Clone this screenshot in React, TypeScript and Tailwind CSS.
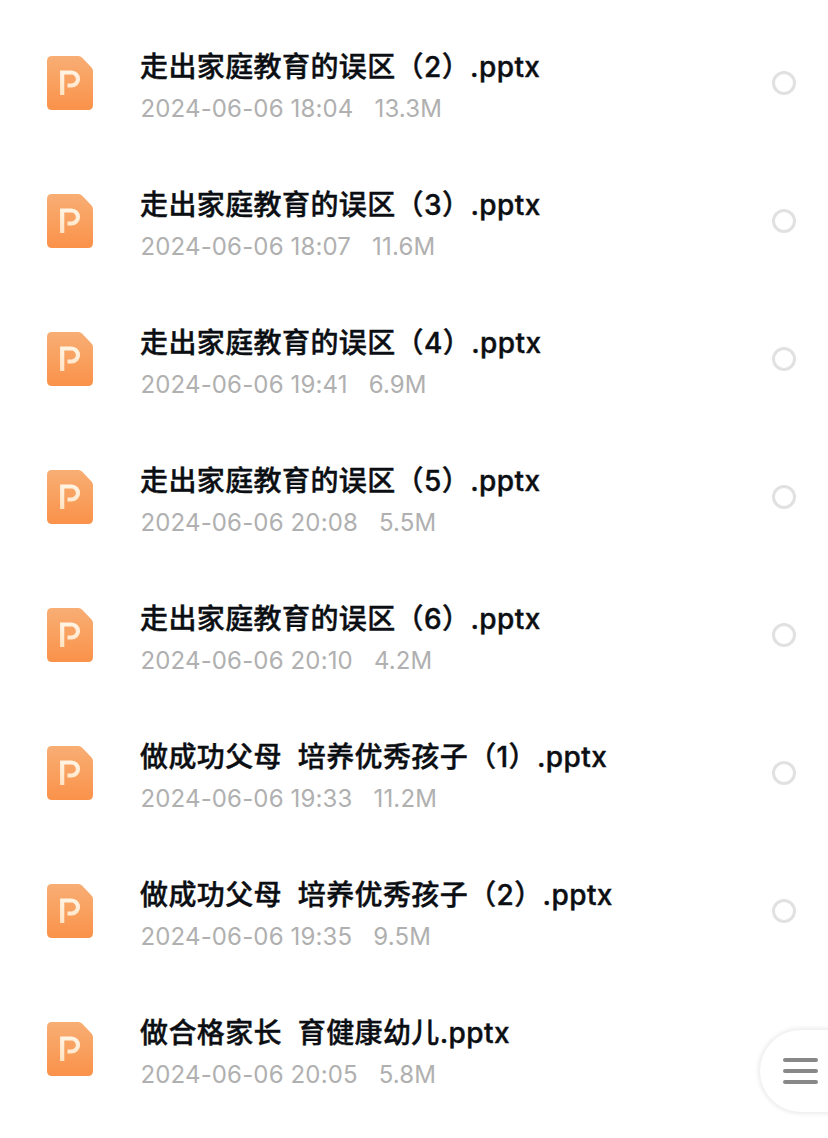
type FileItem = {
  name: string;
  date: string;
  size: string;
  selectable: boolean;
};

const files: FileItem[] = [
  { name: "走出家庭教育的误区（2）.pptx", date: "2024-06-06 18:04", size: "13.3M", selectable: true },
  { name: "走出家庭教育的误区（3）.pptx", date: "2024-06-06 18:07", size: "11.6M", selectable: true },
  { name: "走出家庭教育的误区（4）.pptx", date: "2024-06-06 19:41", size: "6.9M", selectable: true },
  { name: "走出家庭教育的误区（5）.pptx", date: "2024-06-06 20:08", size: "5.5M", selectable: true },
  { name: "走出家庭教育的误区（6）.pptx", date: "2024-06-06 20:10", size: "4.2M", selectable: true },
  { name: "做成功父母  培养优秀孩子（1）.pptx", date: "2024-06-06 19:33", size: "11.2M", selectable: true },
  { name: "做成功父母  培养优秀孩子（2）.pptx", date: "2024-06-06 19:35", size: "9.5M", selectable: true },
  { name: "做合格家长  育健康幼儿.pptx", date: "2024-06-06 20:05", size: "5.8M", selectable: false },
];

function PptIcon() {
  return (
    <svg aria-hidden width="46" height="54" viewBox="0 0 46 54" className="shrink-0">
      <defs>
        <linearGradient id="ppt-body" x1="0" y1="0" x2="0" y2="1">
          <stop offset="0" stopColor="#f8ae74" />
          <stop offset="1" stopColor="#fa924a" />
        </linearGradient>
        <linearGradient id="ppt-letter" x1="0" y1="0" x2="0" y2="1">
          <stop offset="0" stopColor="#fff3e2" />
          <stop offset="1" stopColor="#ffe3c4" />
        </linearGradient>
      </defs>
      <path
        d="M5 0H31.5Q33.500 0 35 1.500L44.500 11.500Q46 13 46 15V49Q46 54 41 54H5Q0 54 0 49V5Q0 0 5 0Z"
        fill="url(#ppt-body)"
      />
      <path
        d="M15.200 39V16.500H24.500A6.300 6.300 0 0 1 24.500 29.500H20.500"
        fill="none"
        stroke="url(#ppt-letter)"
        strokeWidth="4.2"
      />
    </svg>
  );
}

function FileName({ name }: { name: string }) {
  return (
    <p className="text-[28px] leading-[40px] font-medium tracking-[0.4px] text-[#0b0e12] [-webkit-text-stroke:0.4px_#0b0e12]">
      {name.split(/([\d.a-z]+)/).map((part, i) =>
        i % 2 ? (
          <span key={i} className="tracking-[0.4px]">
            {part}
          </span>
        ) : (
          part
        ),
      )}
    </p>
  );
}

function FileRow({ file }: { file: FileItem }) {
  return (
    <li className="flex h-[138px] items-center pr-8 pl-[47px]">
      <PptIcon />
      <div className="ml-[47px] flex-1 pt-[10px] whitespace-pre">
        <FileName name={file.name} />
        <p className="flex gap-[21px] pl-[0.5px] text-[24px] leading-[43px] tracking-[0.15px] text-[#b0b0b0]">
          <span>{file.date}</span>
          <span>{file.size}</span>
        </p>
      </div>
      {file.selectable ? <span className="size-6 rounded-full border-[3px] border-[#e1e1e1]" /> : null}
    </li>
  );
}

export default function App() {
  return (
    <main className="relative h-[1138px] w-[828px] overflow-hidden bg-white pt-[14px] font-['Inter','Noto_Sans_CJK_SC',sans-serif]">
      <ul>
        {files.map((file) => (
          <FileRow key={file.name} file={file} />
        ))}
      </ul>
      <button
        type="button"
        aria-label="菜单"
        className="absolute top-[1030px] -right-3 flex h-[82px] w-[80px] flex-col justify-center gap-[7px] rounded-l-full bg-white pl-[23px] shadow-[0_0_4px_2px_rgba(0,0,0,0.08)]"
      >
        <span className="h-1 w-[35px] rounded-full bg-[#888888]" />
        <span className="h-1 w-[35px] rounded-full bg-[#888888]" />
        <span className="h-1 w-[35px] rounded-full bg-[#888888]" />
      </button>
    </main>
  );
}
